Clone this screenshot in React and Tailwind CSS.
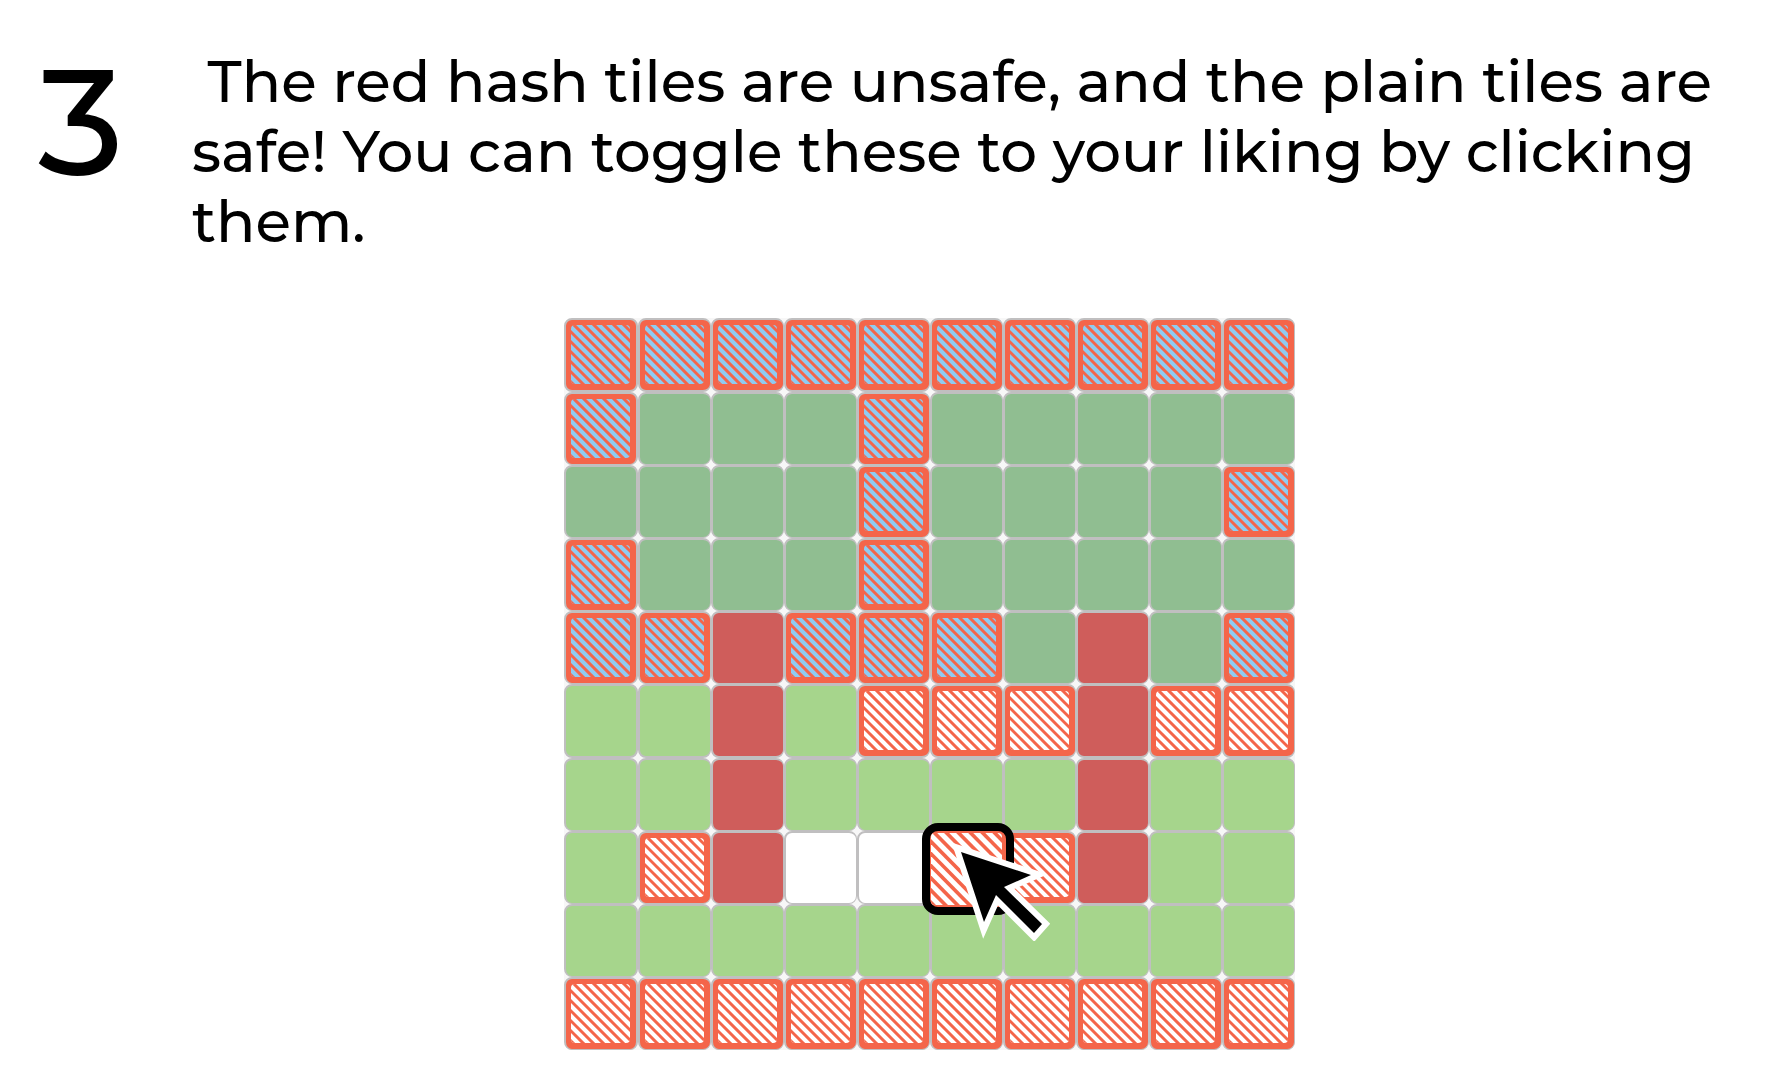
import { useState } from "react";

const LAYOUT = [
  "BBBBBBBBBB",
  "BGGGBGGGGG",
  "GGGGBGGGGB",
  "BGGGBGGGGG",
  "BBRBBBGRGB",
  "LLRLWWWRWW",
  "LLRLLLLRLL",
  "LWRPPWWRLL",
  "LLLLLLLLLL",
  "WWWWWWWWWW",
];

const HOVERED = "7-5";

const FILLS = {
  B: "bg-[#f4654a]",
  W: "bg-[#f4654a]",
  G: "bg-[#90be91]",
  L: "bg-[#a6d58c]",
  R: "bg-[#cf5d5b]",
  P: "bg-white",
};

const TOGGLED = { B: "G", G: "B", W: "L", L: "W", R: "R", P: "W" };

const HATCHES = { B: "#8fcbf1", W: "#ffffff" };

const STRIPES = [-57, -47, -37, -27, -17, -7, 3, 13, 23, 33, 43, 53];

function Hatch({ color }) {
  return (
    <svg
      aria-hidden="true"
      viewBox="0 0 59 59"
      preserveAspectRatio="none"
      className="block h-full w-full rounded-sm"
    >
      <rect width="59" height="59" fill={color} />
      {STRIPES.map((x) => (
        <line key={x} x1={x - 5} y1="-5" x2={x + 65} y2="65" stroke="#f4654a" strokeWidth="3" />
      ))}
    </svg>
  );
}

function Pointer() {
  return (
    <svg
      aria-hidden="true"
      viewBox="0 0 102 102"
      className="pointer-events-none absolute top-2 left-[18px] z-20 h-[102px] w-[102px] max-w-none"
    >
      <path
        d="M13 13 L83 36 L56 48 L94 85 L86 94 L48 56 L36 83 Z"
        fill="#000"
        stroke="#fff"
        strokeWidth="12"
        strokeMiterlimit="10"
        paintOrder="stroke"
      />
    </svg>
  );
}

function Tile({ kind, row, col, onToggle }) {
  const id = row + "-" + col;
  const hatch = HATCHES[kind];
  return (
    <div className="relative">
      <button
        type="button"
        aria-label={"Tile row " + (row + 1) + " column " + (col + 1)}
        aria-pressed={Boolean(hatch)}
        onClick={onToggle}
        className={
          "block h-full w-full rounded-lg border-t-2 border-l-2 border-[#c0bfc0] pt-[5px] pr-1.5 pb-1.5 pl-[5px] " +
          (row % 5 === 0 ? "border-b-2 " : "border-b ") +
          (col === 0 ? "border-r-2 " : "border-r ") +
          FILLS[kind]
        }
      >
        {hatch && <Hatch color={hatch} />}
      </button>
      {id === HOVERED && (
        <>
          <span className="pointer-events-none absolute -top-2 -left-2 z-10 block h-[92px] w-[92px] rounded-2xl border-8 border-black bg-[#f4654a] pt-0.5 pr-1 pb-0.5 pl-px">
            <Hatch color="#ffffff" />
          </span>
          <Pointer />
        </>
      )}
    </div>
  );
}

export default function App() {
  const [rows, setRows] = useState(LAYOUT.map((row) => row.split("")));

  const toggle = (r, c) =>
    setRows((current) =>
      current.map((row, y) =>
        row.map((kind, x) => (y === r && x === c ? TOGGLED[kind] : kind))
      )
    );

  return (
    <main className="bg-white pb-10 font-['Montserrat','Inter',sans-serif] font-medium text-black">
      <header className="flex items-start pt-[47px] pr-10 pl-[38px]">
        <span className="w-[154px] shrink-0 text-[150px] leading-[150px]">3</span>
        <p className="text-[58px] leading-[70px]">
          &nbsp;The red hash tiles are unsafe, and the plain tiles are safe! You can
          toggle these to your liking by clicking them.
        </p>
      </header>
      <section aria-label="Tile grid" className="mt-[61px] flex justify-center pl-20">
        <div className="grid grid-cols-[74px_repeat(9,73px)] grid-rows-[74px_repeat(4,73px)_74px_repeat(4,73px)] rounded-lg bg-[#f7f7f7]">
          {rows.map((row, r) =>
            row.map((kind, c) => (
              <Tile
                key={r + "-" + c}
                row={r}
                col={c}
                kind={kind}
                onToggle={() => toggle(r, c)}
              />
            ))
          )}
        </div>
      </section>
    </main>
  );
}
